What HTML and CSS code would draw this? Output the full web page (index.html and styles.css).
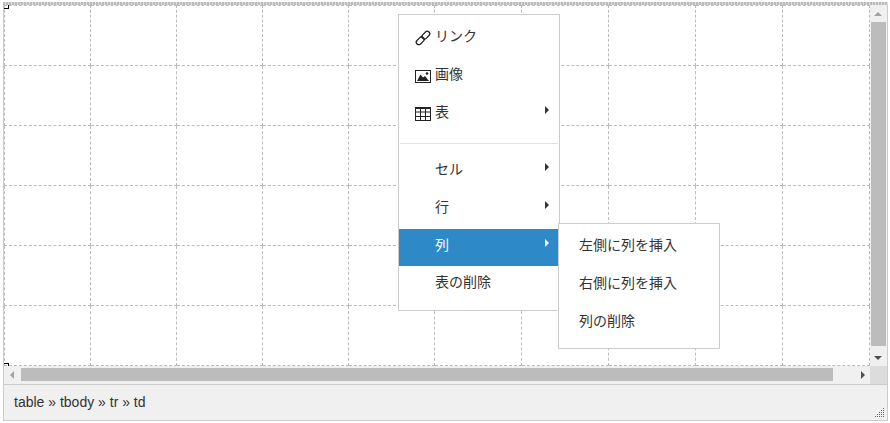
FILE: index.html
```html
<!DOCTYPE html>
<html lang="ja">
<head>
<meta charset="utf-8">
<title>Editor</title>
<link rel="stylesheet" href="styles.css">
</head>
<body>
<div class="editor">
  <div class="toolbar-edge"></div>
  <div class="main">
    <div class="canvas">
      <table class="grid">
        <tbody>
          <tr><td></td><td></td><td></td><td></td><td></td><td></td><td></td><td></td><td></td><td></td></tr>
          <tr><td></td><td></td><td></td><td></td><td></td><td></td><td></td><td></td><td></td><td></td></tr>
          <tr><td></td><td></td><td></td><td></td><td></td><td></td><td></td><td></td><td></td><td></td></tr>
          <tr><td></td><td></td><td></td><td></td><td></td><td></td><td></td><td></td><td></td><td></td></tr>
          <tr><td></td><td></td><td></td><td></td><td></td><td></td><td></td><td></td><td></td><td></td></tr>
          <tr><td></td><td></td><td></td><td></td><td></td><td></td><td></td><td></td><td></td><td></td></tr>
        </tbody>
      </table>
      <span class="corner corner-top"></span>
      <span class="corner corner-bottom"></span>
    </div>
    <div class="vbar">
      <span class="tri tri-up"></span>
      <div class="vthumb"></div>
      <span class="tri tri-down"></span>
    </div>
  </div>
  <div class="hrow">
    <div class="hbar">
      <span class="tri tri-left"></span>
      <div class="hthumb"></div>
      <span class="tri tri-right"></span>
    </div>
    <div class="sb-corner"></div>
  </div>
  <div class="status">
    <span>table » tbody » tr » td</span>
    <svg class="grip" width="10" height="10" viewBox="0 0 10 10" aria-hidden="true">
      <g fill="#5f7058">
        <rect x="8" y="0" width="1" height="1"/>
        <rect x="6" y="2" width="1" height="1"/><rect x="8" y="2" width="1" height="1"/>
        <rect x="4" y="4" width="1" height="1"/><rect x="6" y="4" width="1" height="1"/><rect x="8" y="4" width="1" height="1"/>
        <rect x="2" y="6" width="1" height="1"/><rect x="4" y="6" width="1" height="1"/><rect x="6" y="6" width="1" height="1"/><rect x="8" y="6" width="1" height="1"/>
        <rect x="0" y="8" width="1" height="1"/><rect x="2" y="8" width="1" height="1"/><rect x="4" y="8" width="1" height="1"/><rect x="6" y="8" width="1" height="1"/><rect x="8" y="8" width="1" height="1"/>
      </g>
    </svg>
  </div>

  <div class="menu">
    <div class="group group-icons">
      <div class="item">
        <svg class="icon" width="16" height="16" viewBox="0 0 16 16" aria-hidden="true"><g fill="none" stroke="#222" stroke-width="1.3"><rect x="0.7" y="8.3" width="9" height="5" rx="2.5" transform="rotate(-45 5.2 10.8)"/><rect x="6.3" y="2.7" width="9" height="5" rx="2.5" transform="rotate(-45 10.8 5.2)"/></g></svg>
        <span>リンク</span>
      </div>
      <div class="item">
        <svg class="icon" width="16" height="16" viewBox="0 0 16 16" aria-hidden="true"><rect x="0.5" y="2.5" width="15" height="12" fill="#fff" stroke="#222"/><path d="M2 13 L5.5 6.5 L8 9.5 L10 8 L14 13 Z" fill="#222"/><circle cx="12" cy="5.5" r="1.3" fill="#222"/></svg>
        <span>画像</span>
      </div>
      <div class="item">
        <svg class="icon" width="16" height="16" viewBox="0 0 16 16" aria-hidden="true"><g fill="none" stroke="#222"><rect x="0.5" y="1.5" width="15" height="13"/><path d="M0.5 6H15.5M0.5 10.5H15.5M5.5 2V14.5M10.5 2V14.5"/></g><rect x="0" y="1" width="16" height="2" fill="#222"/></svg>
        <span>表</span>
        <span class="arrow"></span>
      </div>
    </div>
    <div class="sep"></div>
    <div class="group group-plain">
      <div class="item"><span class="noicon">セル</span><span class="arrow"></span></div>
      <div class="item"><span class="noicon">行</span><span class="arrow"></span></div>
      <div class="item active">
        <span class="noicon">列</span><span class="arrow"></span>
        <div class="submenu">
          <div class="subitem">左側に列を挿入</div>
          <div class="subitem">右側に列を挿入</div>
          <div class="subitem">列の削除</div>
        </div>
      </div>
      <div class="item"><span class="noicon">表の削除</span></div>
    </div>
  </div>
</div>
</body>
</html>
```

FILE: styles.css
```css
* { box-sizing: border-box; }
html, body { margin: 0; padding: 0; background: #fff; }
body { width: 890px; height: 423px; overflow: hidden; padding: 2px 2px 2px 3px; font-family: "Liberation Sans", sans-serif; color: #333; }

.editor { position: relative; width: 885px; height: 419px; display: flex; flex-direction: column; border-right: 1px solid #ccc; border-bottom: 1px solid #ccc; border-left: 1px solid #ccc; }
.toolbar-edge { height: 3px; background-image: repeating-linear-gradient(90deg, #bbb 0 2px, #ddd 2px 3px); margin-left: -1px; margin-right: -1px; }
.main { display: flex; height: 361px; }
.canvas { position: relative; width: 866px; height: 361px; background: #fff; overflow: hidden; }

.grid { border-collapse: collapse; table-layout: fixed; width: 866px; height: 361px; }
.grid td { width: 87px; border: 1px dashed #bbb; padding: 0; }
.grid td:nth-child(-n+5) { width: 86px; }

.corner { position: absolute; left: 0; width: 5px; height: 4px; border: 0 solid #000; }
.corner-top { top: 0; border-right-width: 1px; border-bottom-width: 1px; }
.corner-bottom { bottom: 0; height: 3px; border-right-width: 1px; border-top-width: 1px; }

.vbar { position: relative; flex: 1; background: #f0f0f0; display: flex; flex-direction: column; align-items: center; }
.vthumb { margin-top: 17px; width: 15px; height: 324px; background: #bcbcbc; }
.hrow { display: flex; height: 18px; }
.hbar { position: relative; width: 866px; background: #f0f0f0; }
.hthumb { position: absolute; left: 17px; top: 2px; width: 812px; height: 13px; background: #bcbcbc; }
.sb-corner { flex: 1; background: #dcdcdc; }

.tri { position: absolute; width: 0; height: 0; border: solid transparent; }
.tri-up { top: 7px; left: 4px; border-width: 0 4px 4px; border-bottom-color: #a3a3a3; }
.tri-down { bottom: 6px; left: 4px; border-width: 4px 4px 0; border-top-color: #505050; }
.tri-left { left: 6px; top: 5px; border-width: 4px 4px 4px 0; border-right-color: #a3a3a3; }
.tri-right { right: 5px; top: 5px; border-width: 4px 0 4px 4px; border-left-color: #505050; }

.status { position: relative; flex: 1; display: flex; align-items: center; padding: 0 0 2px 10px; background: #f0f0f0; border-top: 1px solid #ccc; font-size: 14px; color: #333; }
.grip { position: absolute; right: 2px; bottom: 2px; }

.menu { position: absolute; left: 394px; top: 12px; width: 162px; height: 297px; padding-top: 2px; background: #fff; border: 1px solid #ccc; font-family: "Noto Sans CJK JP", "Liberation Sans", sans-serif; font-size: 14px; color: #333; }
.item { position: relative; display: flex; align-items: center; height: 38px; padding-left: 16px; }
.group-icons .item { padding-bottom: 2px; }
.group-plain .item { padding-bottom: 8px; }
.icon { flex: none; margin: 5px 4px 0 0; }
.noicon { margin-left: 20px; }
.arrow { position: absolute; left: 146px; top: 13px; width: 0; height: 0; border: solid transparent; border-width: 4px 0 4px 4px; border-left-color: #333; }
.group-plain .arrow { top: 10px; }
.sep { height: 1px; margin: 12px 1px 9px; background: #e2e2e2; }
.item.active { background: #2d8ac7; color: #fff; height: 37px; }
.item.active .arrow { border-left-color: #fff; }
.submenu { position: absolute; left: 159px; top: -6px; width: 162px; height: 126px; padding-top: 2px; background: #fff; border: 1px solid #ccc; color: #333; }
.subitem { display: flex; align-items: center; height: 38px; padding: 0 0 2px 20px; }
```
